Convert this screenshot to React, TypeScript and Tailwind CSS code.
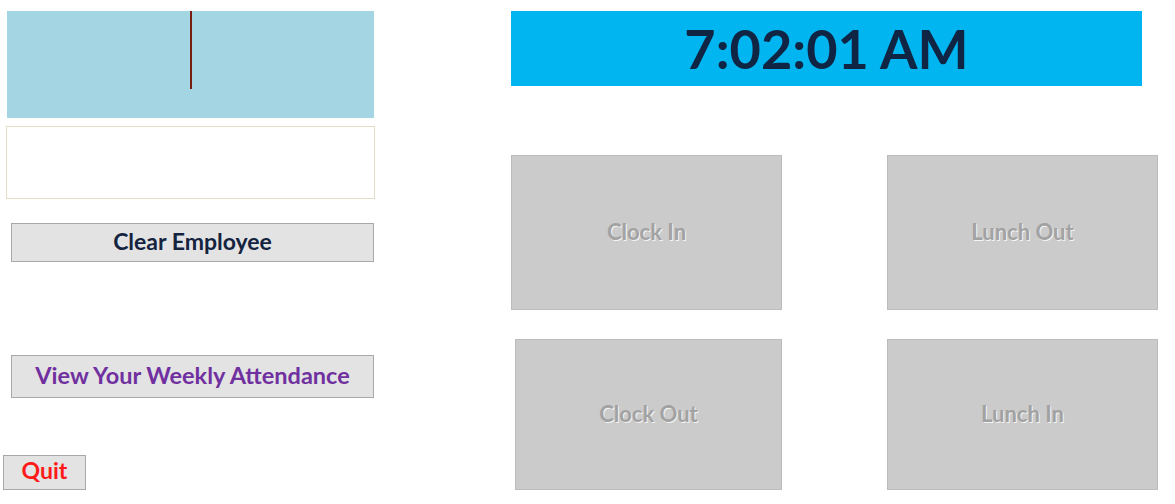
const font = { fontFamily: 'Lato, "Open Sans", sans-serif' };

const PunchButton = ({ label, className }: { label: string; className: string }) => (
  <button
    className={`flex items-center justify-center pb-[2px] bg-[#cbcbcb] border border-[#bcbcbc] text-[22px] font-bold text-[#a2a2a2] [text-shadow:1px_1px_0_#f4f4f4] ${className}`}
  >
    {label}
  </button>
);

const App = () => {
  return (
    <div className="w-[1175px] h-[504px] bg-white flex overflow-hidden" style={font}>
      {/* Left column */}
      <div className="w-[380px] flex flex-col items-start pt-[11px]">
        <div className="ml-[7px] w-[367px] h-[107px] bg-[#a4d5e3] flex justify-center">
          <div className="w-[2px] h-[78px] bg-[#7a1e12]" />
        </div>
        <div className="ml-[6px] mt-[8px] w-[369px] h-[73px] bg-white border border-[#e2ddc3]" />
        <button className="ml-[11px] mt-[24px] w-[363px] h-[39px] pb-[3px] bg-[#e3e3e3] border border-[#a9a9a9] text-[23px] font-bold text-[#14243f]">
          Clear Employee
        </button>
        <button className="ml-[11px] mt-[93px] w-[363px] h-[43px] pb-[2px] bg-[#e3e3e3] border border-[#a9a9a9] text-[23.5px] font-bold text-[#7030a0]">
          View Your Weekly Attendance
        </button>
        <button className="ml-[3px] mt-[57px] w-[83px] h-[35px] pb-[4px] bg-[#e3e3e3] border border-[#a9a9a9] text-[23px] leading-none font-bold text-[#ff1a1a]">
          Quit
        </button>
      </div>

      {/* Right column */}
      <div className="ml-[131px] flex flex-col pt-[11px]">
        <div className="w-[631px] h-[75px] bg-[#00b5f0] flex items-center justify-center">
          <span className="text-[54px] font-bold text-[#0f2543] leading-none">7:02:01 AM</span>
        </div>
        <div className="mt-[69px] flex gap-[105px]">
          <PunchButton label="Clock In" className="w-[271px] h-[155px]" />
          <PunchButton label="Lunch Out" className="w-[271px] h-[155px]" />
        </div>
        <div className="mt-[29px] flex gap-[105px]">
          <PunchButton label="Clock Out" className="ml-[4px] w-[267px] h-[151px]" />
          <PunchButton label="Lunch In" className="w-[271px] h-[151px]" />
        </div>
      </div>
    </div>
  );
};

export default App;
